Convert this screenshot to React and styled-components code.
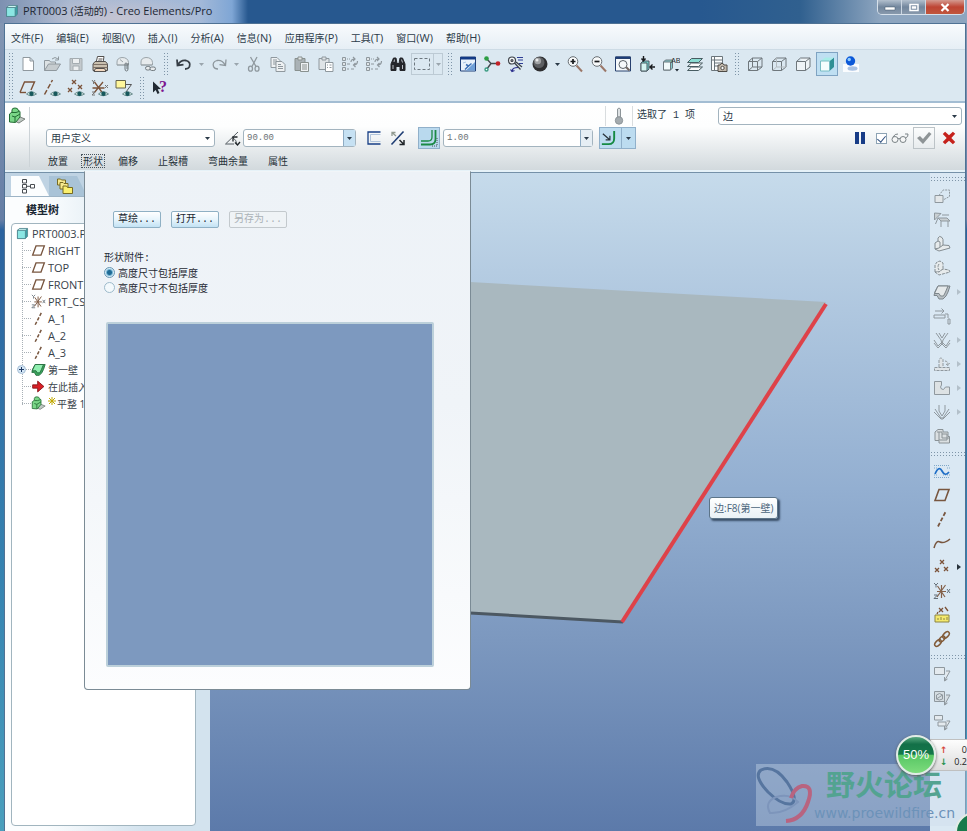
import React from 'react'
import styled, { createGlobalStyle, css } from 'styled-components'

const ui = '"Open Sans", "Noto Sans CJK SC", sans-serif'
const mono = '"Liberation Mono", "Noto Sans CJK SC", monospace'

const GlobalStyle = createGlobalStyle`
* { box-sizing: border-box; }
body {
  margin: 0;
  font-family: ${ui};
  font-size: 10px;
  line-height: 14px;
  color: #2c3b49;
  overflow: hidden;
}
button, input, select { font: inherit; color: inherit; margin: 0; padding: 0; }
button { background: none; border: 0; }
`

const G = '#8f989e'
const B = '#7b5238'

const eye = (
  <g>
    <path d="M7.500 15 Q12 10.500 17.500 15 Q12 18.500 7.500 15Z" fill="#cfe3df" stroke="#41686a" strokeWidth=".7" />
    <circle cx="12.500" cy="14.700" r="2.200" fill="#17585c" />
  </g>
)

const cubeLines = 'M2.500 6.500h9v9h-9zM6.500 3h9.500v9l-4.500 3.500M2.500 6.500l4-3.500M11.500 6.500L16 3'
const cross = (x, y) => <path d={`M${x - 2} ${y - 2}l4 4m0-4l-4 4`} stroke={B} strokeWidth="1.300" />

const icons = {
  part: (
    <g stroke="#4b7f88">
      <path d="M2 5l3-2.500h11V13l-3 3H2z" fill="#3c9fa4" />
      <path d="M2 4.500h11V16H2z" fill="#8be6e3" />
      <path d="M2 4.500l3-2.500h11l-3 2.500z" fill="#d4fbf8" />
    </g>
  ),
  newFile: <path d="M4 2.500h7l3.500 3.500v9.500H4zM11 2.500V6h3.500" fill="#fff" stroke={G} />,
  open: (
    <g fill="#dde2e4" stroke={G}>
      <path d="M1.500 15.500V5.500h5l1 1.500h5v2" />
      <path d="M1.500 15.500l4-6.500h12l-4 6.500z" fill="#c6cccf" />
      <path d="M9 4q3-3 6 0M15.500 1.500V5H12" fill="none" />
    </g>
  ),
  save: (
    <g fill="#c3c9cd" stroke="#a4acb1">
      <path d="M3 3.500h12v12H3z" />
      <path d="M5.500 3.500h7v5h-7zM6 11h6v4.500H6z" fill="#eceff1" />
    </g>
  ),
  print: (
    <g stroke="#54514f">
      <path d="M5 8l1.500-6.500H13L12 8" fill="#fff" />
      <path d="M7.500 4h4M7 6h4" />
      <path d="M2 9l2-2.500h10.500L16.500 9v6.500H2z" fill="#c9bfae" />
      <path d="M2 9.500h14.500M2 12.500h14.500" stroke="#7c7065" />
      <path d="M4.500 13.500h9l1.500 3H3z" fill="#f3d9c1" />
    </g>
  ),
  mailAttach: (
    <g fill="#e7ebed" stroke="#9ba4a9">
      <path d="M2 10V7q0-4 5-4.500 6 0 6.500 5v2.500z" />
      <path d="M2 10h11M5 4.500l3 2.500" />
      <path d="M13 8v6q0 2-1.500 2T10 14V9q0-1 1-1t1 1v5" stroke="#6f787d" fill="none" />
    </g>
  ),
  mailLink: (
    <g fill="#e7ebed" stroke="#9ba4a9">
      <path d="M2 10V7q0-4 5-4.500 6 0 6.500 5v2.500z" />
      <path d="M2 10h11" />
      <rect x="6.500" y="11.500" width="5" height="3.500" rx="1.700" stroke="#737c81" />
      <rect x="11" y="12" width="5.500" height="3.500" rx="1.700" stroke="#737c81" />
    </g>
  ),
  undo: <path d="M2 4.500l.5 6 6-.8M2.800 10Q6 4.500 11 5.500q5 1.500 3.500 6-1 2.500-4.500 2.500" fill="none" stroke="#363e46" strokeWidth="1.800" />,
  redo: <path d="M16 4.500l-.5 6-6-.8M15.200 10Q12 4.500 7 5.500q-5 1.500-3.500 6 1 2.500 4.500 2.500" fill="none" stroke="#8e979d" strokeWidth="1.300" />,
  cut: (
    <g fill="none" stroke={G} strokeWidth="1.300">
      <path d="M5.500 2l5.500 9.500M12 2L7 11.500" />
      <ellipse cx="5.500" cy="13.700" rx="2" ry="2.500" />
      <ellipse cx="12" cy="13.700" rx="2" ry="2.500" />
    </g>
  ),
  copy: (
    <g fill="#eef1f3" stroke={G}>
      <path d="M2 2.500h6l3 3v7H2z" />
      <path d="M4 5h4M4 7h5M4 9h4" />
      <path d="M7 6.500h6l3 3v7H7z" />
      <path d="M9 9.500h3M9 11.500h5M9 13.500h5" />
    </g>
  ),
  paste: (
    <g fill="#aab2b6" stroke="#89918f">
      <path d="M2 3.500h10v12H2z" />
      <path d="M5 2h4v3H5z" fill="#e4e7e8" />
      <path d="M7.500 7.500h8v9h-8z" fill="#eef1f3" />
      <path d="M9 10h5M9 12h5M9 14h5" />
    </g>
  ),
  pasteSpecial: (
    <g fill="#dfe4e7" stroke={G}>
      <path d="M2 3.500h10v11H2z" />
      <path d="M5 2h4v3H5z" />
      <path d="M8.500 7.500h7.500v9H8.500z" fill="#fff" />
      <path d="M10 10h1m1.500 0h2M10 12.500h1m1.500 0h2" />
    </g>
  ),
  regen: (
    <g fill="none" stroke={G}>
      <path d="M1.500 2.500h3v3h-3zM1.500 7.500h3v3h-3zM1.500 12.500h3v3h-3z" fill="#dfe4e7" />
      <path d="M6 4h1m1 0h1M6 9h3M6 14h2m2 0h3" />
      <path d="M10 7q0-3 4-3m-2-2l2 2-2 2M16.500 6q0 4-4 4m2 2l-2-2 2-2" strokeWidth="1.200" />
    </g>
  ),
  find: (
    <g fill="#24262b" stroke="#24262b">
      <path d="M2 15.500V9l2.500-6H7l1 5.500h2L11 3h2.500L16 9v6.500h-5v-4H7v4z" />
      <path d="M4 10v4M5.500 4.500L5 7M12.500 4.500l1 3M13.500 10v4" stroke="#b9bec6" />
    </g>
  ),
  selectBox: <path d="M1.500 3.500h15v11h-15z" fill="none" stroke="#6c777e" strokeDasharray="3 2" />,
  repaint: (
    <g>
      <path d="M1.500 2h15v14h-15z" fill="#e8f2fb" stroke="#1f3f78" />
      <path d="M1.500 2h15v2.500h-15z" fill="#123a86" />
      <path d="M16 7v8.500H7z" fill="#6ea0d8" />
      <path d="M7 9.500l2.500 1.500 3-2.500M9.500 11L6 14.500" stroke="#3b6fb5" strokeWidth="1.500" fill="none" />
      <path d="M4 8l3-1" stroke="#a9c6e6" />
    </g>
  ),
  spin: (
    <g strokeWidth="1.400">
      <path d="M3.500 3.500L8 8.500l-4.500 6M8 8.500h7" stroke="#43494d" fill="none" />
      <circle cx="3.500" cy="3.500" r="2.300" fill="#2d9e44" />
      <circle cx="15" cy="8.500" r="2.300" fill="#c32127" />
      <circle cx="3.500" cy="14.500" r="1.500" fill="#fff" stroke="#3b9c83" />
    </g>
  ),
  orient: (
    <g fill="none" stroke="#3b4047" strokeWidth="1.200">
      <circle cx="5" cy="5.500" r="3.500" fill="#f4f6f7" />
      <circle cx="5" cy="5.500" r="1" />
      <path d="M7.500 8l6 6.500M9 7l6 5" />
      <path d="M10 2.500h6M11 5h5M12 8.500h4" stroke="#2f3d95" />
      <path d="M11 12.500q-6 0-6 4m-1.500-2L5 16.500l2.500-1" stroke="#2b2f8c" />
    </g>
  ),
  shade: (
    <g>
      <circle cx="9" cy="9" r="7.500" fill="#2e2f31" />
      <circle cx="8" cy="7.500" r="5.500" fill="#5d5f62" />
      <circle cx="6.800" cy="6" r="3.300" fill="#a0a2a4" />
      <circle cx="6" cy="5" r="1.500" fill="#e9eaea" />
    </g>
  ),
  zoomIn: (
    <g fill="none">
      <path d="M10.500 10.500l5.500 6" stroke="#9b7768" strokeWidth="2" />
      <circle cx="7" cy="6.500" r="4.800" fill="#f7f9fa" stroke="#686e73" />
      <path d="M4.500 6.500h5M7 4v5" stroke="#17191c" strokeWidth="1.700" />
    </g>
  ),
  zoomOut: (
    <g fill="none">
      <path d="M10.500 10.500l5.500 6" stroke="#9b7768" strokeWidth="2" />
      <circle cx="7" cy="6.500" r="4.800" fill="#f7f9fa" stroke="#686e73" />
      <path d="M4.500 6.500h5" stroke="#17191c" strokeWidth="1.700" />
    </g>
  ),
  refit: (
    <g fill="#f6f9fb" stroke="#27406e">
      <path d="M1.500 2h15v14h-15z" />
      <path d="M1.500 2h15v1.500h-15z" fill="#123a86" />
      <path d="M11.500 11.500l4 4" stroke="#70655f" strokeWidth="2" />
      <circle cx="9" cy="9.500" r="4" stroke="#5b6268" />
    </g>
  ),
  reorient: (
    <g stroke="#4a5b63">
      <path d="M3 8l2-2h6v8l-2 2H3z" fill="#73cfcb" />
      <path d="M3 8h6v8H3z" fill="#d5f4f2" />
      <path d="M5.500 1v4.500m-2-2l2 2.500 2-2.500M17 12h-4m1.500-2.500L12 12l2.500 2.500" stroke="#17191c" strokeWidth="1.400" fill="none" />
    </g>
  ),
  saved: (
    <g stroke="#6a767c">
      <path d="M1.500 7l2-2h7v8l-2 2h-7z" fill="#85c9cb" />
      <path d="M1.500 7h7v8h-7z" fill="#f1fafa" />
      <path d="M13 14h4l-2 2.500z" fill="#1c2630" stroke="none" />
      <text x="9" y="8" fontSize="8" fontFamily="Liberation Mono, monospace" fill="#30363c" stroke="none">AB</text>
    </g>
  ),
  layers: (
    <g fill="#fafbfb" stroke="#485c62">
      <path d="M1.500 15.500l4-3.500h11l-4 3.500z" />
      <path d="M1.500 11.500l4-3.500h11l-4 3.500z" />
      <path d="M1.500 7.500l4-4h11l-4 4z" fill="#8bdcd2" />
    </g>
  ),
  viewMgr: (
    <g fill="#fbfcfc" stroke="#6b757b">
      <path d="M1.500 1.500h11v14h-11zM4.500 1.500v14M1.500 5h11M4.500 8h8M4.500 11h8" />
      <path d="M8 10h2l1-1.500h2l1 1.500h3v6.500H8z" fill="#c2b9ac" stroke="#4e4b46" />
      <circle cx="12.500" cy="13" r="1.700" stroke="#4e4b46" />
    </g>
  ),
  wire: <path d={cubeLines + 'M6.500 3v9H16M6.500 12l-4 3.500'} fill="none" stroke="#6f777c" />,
  hidden: (
    <g fill="none" stroke="#6f777c">
      <path d={cubeLines} />
      <path d="M6.500 3v9H16M6.500 12l-4 3.500" stroke="#b4bbbf" />
    </g>
  ),
  noHidden: <path d={cubeLines} fill="#eef3f6" stroke="#6f777c" />,
  shaded: (
    <g>
      <path d="M11.500 6L16 2.500v9.500l-4.500 4z" fill="#2f8f94" />
      <path d="M2.500 6L7 2.500h9L11.500 6z" fill="#a9ece8" />
      <path d="M2.500 6h9v10h-9z" fill="#f4fdfd" stroke="#77bcc3" />
    </g>
  ),
  realism: (
    <g>
      <path d="M1 9h16v8H1z" fill="#fafcfe" />
      <ellipse cx="10.500" cy="13.500" rx="5" ry="2.200" fill="#a8c1e3" />
      <circle cx="8.500" cy="6" r="4.700" fill="#0b58d8" />
      <circle cx="7.200" cy="4.500" r="1.700" fill="#8ecbff" />
    </g>
  ),
  planeEye: (
    <g>
      <path d="M1 13.500L5.500 3h10l-3.500 8" fill="none" stroke={B} strokeWidth="1.400" />
      <path d="M1 13.500h6" stroke={B} strokeWidth="1.400" />
      {eye}
    </g>
  ),
  axisEye: (
    <g>
      <path d="M1.500 15.500L9.500 1" stroke={B} strokeWidth="1.500" strokeDasharray="5 2" />
      {eye}
    </g>
  ),
  pointEye: <g>{cross(7, 3)}{cross(3, 11)}{cross(13, 8)}{eye}</g>,
  csysEye: (
    <g>
      <path d="M1.500 9h12M3.500 3l8 11M12 3L3 14" stroke={B} strokeWidth="1.300" />
      <path d="M1 1l1.500 2L4 1M2.500 3v2M14 6l3 3m0-3l-3 3M1 13h3l-3 3h3" stroke="#777" fill="none" />
      {eye}
    </g>
  ),
  noteEye: (
    <g>
      <path d="M1 1.500h9.500v7.500H1z" fill="#fff79b" stroke="#66654c" />
      <path d="M11 5.500h5.500L11 13" fill="none" stroke="#555" />
      {eye}
    </g>
  ),
  help: (
    <g>
      <path d="M2 2.500v11l2.700-2.500 1.800 4 2-1-1.800-3.700 3.300-.3z" fill="#222a33" />
      <text x="8" y="13" fontSize="16" fontWeight="700" fontFamily="Liberation Serif, serif" fill="#7d1690">?</text>
    </g>
  ),
  plane: <path d="M2 14.500L6 3.500h10l-4 11z" fill="none" stroke="#78563f" strokeWidth="1.600" />,
  axis: <path d="M5 16.500L13 1" stroke="#78563f" strokeWidth="1.800" strokeDasharray="4 2" />,
  csys: (
    <g fill="none">
      <path d="M4 9.500h9M4.500 4l7.500 11M12.500 3L4 15M8.500 3v13" stroke="#84614a" strokeWidth="1.200" />
      <path d="M1 1l2 2 2-2M3 3v2.500M14 7l3 4m0-4l-3 4M1 13h3.500L1 16.500h4" stroke="#66717a" />
    </g>
  ),
  wall: (
    <g stroke="#20663a">
      <path d="M5 3h12l-2 6-2 4-3 3H6l-2-3.500H1l1-4z" fill="#3aa65c" />
      <path d="M5 3h10l-2.500 6-2 4H7.500L6 10.500H1.500z" fill="#91efb1" />
    </g>
  ),
  insert: <path d="M2 7h6V2.500l7.500 6.500L8 15.500V11H2z" fill="#d81f26" stroke="#7f1013" />,
  flat: (
    <g stroke="#236c34">
      <path d="M4 13l7 3 6-4-5-2z" fill="#bfc9c3" stroke="#7a827d" />
      <path d="M1.500 14V7l2.500-2V3q0-2 3-2t3 2l2 1.500V10l-4.500 5.500-6-.5z" fill="#7ad688" />
      <path d="M4 5.500h4l3-1M4 9l3 1 5-3M7 10v5" fill="none" />
    </g>
  ),
  tree: <path d="M3.500 2.500h4v3.500h-4zM3.500 7.500h4v3.500h-4zM3.500 12.500h4V16h-4zM11.500 7.500h4v3.500h-4zM8 9.300h3" fill="#fff" stroke="#484d52" />,
  folders: (
    <g fill="#f7e98e" stroke="#776b23">
      <path d="M1.500 8V2h3l1 1h4v5z" />
      <path d="M4 12V5.500h3l1 1h4V12z" />
      <path d="M7 16.500V9h3.500l1 1.500h5v6z" fill="#fbf06e" />
    </g>
  ),
  angle: (
    <g fill="none" stroke="#555d62">
      <path d="M14 3L1.500 15H10" />
      <path d="M8.500 8.500q4 2 4.500 7" />
      <path d="M9 12.500V8h4.500M11 13.500l2.500 2.500 2.500-3" stroke="#20262a" strokeWidth="1.300" />
    </g>
  ),
  profile: (
    <g fill="none">
      <path d="M15.500 3H3v12h12.500" stroke="#173f86" strokeWidth="1.300" />
      <path d="M15.500 5.500h-10v7h10" stroke="#b1c5dc" />
    </g>
  ),
  flip: (
    <g fill="none">
      <path d="M14.500 2.500L2.500 15.500" stroke="#1f3e74" strokeWidth="1.600" />
      <path d="M7 7L3 3.500M3 7V3.500h3.500" stroke="#929b91" strokeWidth="1.300" />
      <path d="M10.500 11l4 4M15 11v4.500h-4.500" stroke="#20262a" strokeWidth="1.500" />
    </g>
  ),
  bend: (
    <g fill="none">
      <path d="M12 1v7q0 4-4 4H1" stroke="#1b8a45" strokeWidth="1.300" />
      <path d="M15.500 1v9q0 5.500-5.500 5.500H1" stroke="#1b8a45" strokeWidth="1.800" />
      <path d="M17 9v8h-6" stroke="#455" strokeDasharray="1 1" />
    </g>
  ),
  radius: (
    <g fill="none">
      <path d="M15 1v8q0 6-6 6H2" stroke="#168a43" strokeWidth="2" />
      <path d="M3 4l7 6M10.500 6v4.500H6" stroke="#28333a" strokeWidth="1.300" />
    </g>
  ),
  thermo: (
    <g stroke="#8d9599">
      <path d="M7.500 2q1.500-2 3 0v8h-3z" fill="#dde1e3" />
      <circle cx="9" cy="13.500" r="3.700" fill="#a4abaf" />
    </g>
  ),
  pause: <path d="M4 3h4v12H4zM10 3h4v12h-4z" fill="#173c86" />,
  glasses: (
    <g fill="#f5f6f6" stroke="#7b8387">
      <circle cx="4" cy="10.500" r="3" />
      <circle cx="12" cy="10.500" r="3" />
      <path d="M7 10q1-1.500 2 0M2 8q2-3.500 5-3M14.500 9q3-1 2.500-4h-3" fill="none" />
    </g>
  ),
  check: <path d="M2 9l3-2 3 3 6-7 2.500 2L8 15z" fill="#8e9496" />,
  cancel: <path d="M1 4l3-3 5 4.500L14 1l3 2.500L12 9l5 5-3 3-5-4.500L4 17l-3-3 5-5z" fill="#c5221c" />,
  extrude: (
    <g fill="#e3e7e9" stroke={G}>
      <path d="M2 8.500h8v7H2z" />
      <path d="M6 8.500L10 3h6.500v6.500L10 13" fill="none" strokeDasharray="2 1" />
    </g>
  ),
  unattached: (
    <g fill="#c9cfd2" stroke={G}>
      <path d="M1.500 2v7L8 2.500zM5 7h9l3 3H8z" />
      <path d="M5 7L2.500 13M15 10v6M8 10v6M9 4h7" />
    </g>
  ),
  flatWall: (
    <g fill="#e7ebec" stroke="#848d92">
      <path d="M2 14V8l3-2V3q1.500-3 4-.5l1 2V10l-4 4z" />
      <path d="M5 6l2 1v5M2 14l4 2 11-3-1-2.500-6-.5-4 3z" />
    </g>
  ),
  flange: (
    <g fill="#e7ebec" stroke="#848d92" strokeDasharray="3 1">
      <path d="M2 13V6l2-3 3-1 3 2v6l-4 3z" />
      <path d="M2 13l4 3 11-3-1-2-6-1-4 3z" />
      <path d="M6 5q-2 3 0 6" fill="none" />
    </g>
  ),
  grayWall: (
    <g fill="#b9c0c4" stroke="#7d868b">
      <path d="M5 3h12l-2 6-2 4-3 3H6l-2-3.500H1l1-4z" />
      <path d="M5 3h10l-2.500 6-2 4H7.500L6 10.500H1.500z" fill="#e5e9ea" />
    </g>
  ),
  extend: <path d="M2 4h9m-2.500-2.500L11 4 8.500 6.500M1 8h11v3H1zM12 7h3v4M15 12h2v5h-2z" fill="none" stroke={G} />,
  bendAll: <path d="M3 2l5 7 1 4 1-4 5-7M6 2l3 5 3-5M1 9l4 6 4-4 4 4 4-6M1 12l4 5 4-4 4 4 4-5" fill="none" stroke={G} />,
  edgeBend: <path d="M1.500 12.500h15v3h-15zM6 12V4.500q2-3 4 0V12M12 6q3 0 3 4m-2-1l2 1.500L16.500 8" fill="#dfe4e7" stroke={G} strokeDasharray="3 1" />,
  notch: <path d="M1.500 2.500h7V6q-2 2 0 4t4-2h4v7.500h-15z" fill="#dde2e4" stroke={G} />,
  vBend: <path d="M2 6l6 9h2l6-9M6 2v6l3 5 3-5V2M1 9l7 7h2l7-7" fill="none" stroke={G} />,
  pattern: <path d="M2 5l3-2.500h5V5h5v4.500h1.500V16H6v-2.500H2zM4 5h5v6h7M6 5v8M9 7h5v6H6" fill="#dbe0e2" stroke="#8a9296" />,
  sketch: (
    <g fill="none">
      <path d="M1 3.500h16M1 6h3m10 0h3M1 15.500h16M1 13h3m6 0h7" stroke="#7fa8c8" strokeDasharray="1 1" />
      <path d="M2 12q4-9 7-3t7 1" stroke="#1f6fc7" strokeWidth="1.700" />
    </g>
  ),
  curve: <path d="M1 14q2-8 6-6t10-3" fill="none" stroke="#78563f" strokeWidth="1.500" />,
  points: <g>{cross(9, 4)}{cross(4, 12)}{cross(13, 11)}</g>,
  evaluate: (
    <g>
      {cross(8, 4)}
      <path d="M12 1l3 4M5 6l-1 2" stroke={B} strokeWidth="1.300" />
      <path d="M2 9h14v7H2z" fill="#f4e96d" stroke="#8b8445" />
      <path d="M5 12v2m3-3v3m3-2v2m3-3v3" stroke="#8b8445" />
    </g>
  ),
  chain: (
    <g fill="none" stroke="#815a37" strokeWidth="1.500">
      <ellipse cx="5" cy="13" rx="4" ry="2.300" transform="rotate(-45 5 13)" />
      <ellipse cx="9" cy="9" rx="3.500" ry="2" transform="rotate(-45 9 9)" />
      <ellipse cx="13" cy="5" rx="4" ry="2.300" transform="rotate(-45 13 5)" />
    </g>
  ),
  noteGray: <path d="M1.500 2.500h10v7h-10zM13 6h4l-5.500 10m0-4v4l3-2" fill="#e4eaee" stroke={G} />,
  symbolGray: <path d="M1.500 2.500h10v10h-10zM3.500 6q3-3 6 0v4q-3 2-6 0zM3.500 10l6-4M13 6h4l-5.500 10m0-4v4l3-2" fill="#d5dde2" stroke={G} />,
  linkGray: <path d="M1.500 2.500h8v4.500h-8zM5 9h8v4H5zM13.500 8h3.500l-5.500 9m0-4v4l3-2" fill="#e4eaee" stroke={G} />,
}

const Svg = styled.svg`
  display: block;
  flex: none;
`

const Icon = ({ name, size = 18 }) => (
  <Svg width={size} height={size} viewBox="0 0 18 18" fill="none" aria-hidden="true">
    {icons[name]}
  </Svg>
)

const Caret = ({ color = '#2b3a48' }) => (
  <Svg width="7" height="5" viewBox="0 0 7 5" aria-hidden="true">
    <path d="M1 1h5L3.500 4z" fill={color} />
  </Svg>
)

const menus = [
  ['文件', '(F)'], ['编辑', '(E)'], ['视图', '(V)'], ['插入', '(I)'], ['分析', '(A)'],
  ['信息', '(N)'], ['应用程序', '(P)'], ['工具', '(T)'], ['窗口', '(W)'], ['帮助', '(H)'],
]

const mainTools = [
  'newFile', 'open', 'save', 'print', 'mailAttach', 'mailLink', '|',
  'undo', 'v', 'redo', 'v', 'cut', 'copy', 'paste', 'pasteSpecial', 'regen', 'regen', 'find', 'box', '|',
  'repaint', 'spin', 'orient', 'shade', 'V', 'zoomIn', 'zoomOut', 'refit', 'reorient', 'saved', 'layers', 'viewMgr', '|',
  'wire', 'hidden', 'noHidden', 'shaded', 'realism',
]

const datumTools = ['planeEye', 'axisEye', 'pointEye', 'csysEye', 'noteEye', '|', 'help']

const sideTools = [
  '-', 'extrude', 'unattached', 'flatWall', 'flange', 'grayWall>', 'extend', 'bendAll>', 'edgeBend>', 'notch>', 'vBend>', 'pattern',
  '-', 'sketch', 'plane', 'axis', 'curve', 'points>', 'csys', 'evaluate', 'chain',
  '-', 'noteGray', 'symbolGray', 'linkGray',
]

const treeItems = [
  { icon: 'plane', label: 'RIGHT' },
  { icon: 'plane', label: 'TOP' },
  { icon: 'plane', label: 'FRONT' },
  { icon: 'csys', label: 'PRT_CS' },
  { icon: 'axis', label: 'A_1' },
  { icon: 'axis', label: 'A_2' },
  { icon: 'axis', label: 'A_3' },
  { icon: 'wall', label: '第一壁', cjk: true, plus: true },
  { icon: 'insert', label: '在此插入', cjk: true },
  { icon: 'flat', label: '平整 1', cjk: true, star: true },
]

const Tools = ({ items }) => items.map((t, i) => {
  if (t === '|') return <Grip key={i} />
  if (t === 'v' || t === 'V') {
    return <CaretButton key={i} aria-label="more"><Caret color={t === 'v' ? '#9aa5ad' : undefined} /></CaretButton>
  }
  if (t === 'box') {
    return (
      <SelectTool key={i} aria-label={t}>
        <Icon name="selectBox" />
        <SelectCaret><Caret color="#9aa5ad" /></SelectCaret>
      </SelectTool>
    )
  }
  return <ToolButton key={i} aria-label={t} $active={t === 'shaded'}><Icon name={t} /></ToolButton>
})

const Title = () => (
  <TitleBar>
    <Icon name="part" size={14} />
    <TitleText>PRT0003 (<Han>活动的</Han>) - Creo Elements/Pro</TitleText>
    <WindowButtons>
      <WindowButton aria-label="minimize">
        <Svg width="12" height="8"><path d="M1 4h10v3H1z" fill="#fff" stroke="#43566b" strokeWidth=".5" /></Svg>
      </WindowButton>
      <WindowButton aria-label="maximize">
        <Svg width="12" height="9"><path d="M2 1.500h8v6H2zM4.500 4h3v1h-3z" fill="none" stroke="#fff" strokeWidth="1.500" /></Svg>
      </WindowButton>
      <WindowButton aria-label="close" $close>
        <Svg width="12" height="9"><path d="M2.500 1l7 7m0-7l-7 7" stroke="#fff" strokeWidth="2.200" /></Svg>
      </WindowButton>
    </WindowButtons>
  </TitleBar>
)

const Dashboard = () => (
  <Dash>
    <DashIcon><Icon name="flat" /></DashIcon>
    <DashBody>
      <StatusRow>
        <StatusIcon><Icon name="thermo" /></StatusIcon>
        <StatusText>选取了 1 项</StatusText>
        <SelectWrap $width="244px">
          <Select aria-label="过滤器" defaultValue="边"><option>边</option></Select>
          <Caret />
        </SelectWrap>
      </StatusRow>
      <DashRow>
        <SelectWrap $width="169px">
          <Select aria-label="形状" defaultValue="用户定义"><option>用户定义</option></Select>
          <Caret />
        </SelectWrap>
        <AngleLabel htmlFor="angle"><Icon name="angle" /></AngleLabel>
        <Combo $width="113px">
          <ComboInput id="angle" aria-label="角度" defaultValue="90.00" />
          <ComboButton $blue aria-label="角度列表"><Caret /></ComboButton>
        </Combo>
        <PlainButtons>
          <ToolButton aria-label="轮廓"><Icon name="profile" /></ToolButton>
          <ToolButton aria-label="反向"><Icon name="flip" /></ToolButton>
        </PlainButtons>
        <Toggle aria-label="折弯"><Icon name="bend" /></Toggle>
        <Combo $width="150px">
          <ComboInput aria-label="半径" defaultValue="1.00" />
          <ComboButton aria-label="半径列表"><Caret /></ComboButton>
        </Combo>
        <SplitButton aria-label="内侧半径">
          <Icon name="radius" size={17} />
          <SplitCaret><Caret /></SplitCaret>
        </SplitButton>
        <Confirm>
          <BareButton aria-label="暂停"><Icon name="pause" /></BareButton>
          <CheckBox type="checkbox" aria-label="预览" defaultChecked />
          <Icon name="glasses" />
          <AcceptButton aria-label="确定"><Icon name="check" /></AcceptButton>
          <BareButton aria-label="取消"><Icon name="cancel" size={14} /></BareButton>
        </Confirm>
      </DashRow>
      <DashTabs>
        <DashTab>放置</DashTab>
        <DashTab $active>形状</DashTab>
        <DashTab>偏移</DashTab>
        <DashTab $wide>止裂槽</DashTab>
        <DashTab $wide>弯曲余量</DashTab>
        <DashTab $wide>属性</DashTab>
      </DashTabs>
    </DashBody>
  </Dash>
)

const ModelTree = () => (
  <Side>
    <SideTabs>
      <SideTab $active aria-label="模型树"><Icon name="tree" /></SideTab>
      <SideTab aria-label="文件夹"><Icon name="folders" /></SideTab>
    </SideTabs>
    <SideTitle>模型树</SideTitle>
    <TreeBox>
      <TreeRoot><Icon name="part" size={13} />PRT0003.P</TreeRoot>
      <TreeList>
        {treeItems.map((item) => (
          <TreeItem key={item.label} $cjk={item.cjk}>
            {item.plus && (
              <Plus width="9" height="9">
                <circle cx="4.500" cy="4.500" r="4" fill="#d4e6f5" stroke="#a7bfd6" />
                <path d="M2 4.500h5M4.500 2v5" stroke="#1d3a66" />
              </Plus>
            )}
            <Icon name={item.icon} size={15} />
            {item.star && (
              <Star width="8" height="8">
                <path d="M4 0v8M0 4h8M1 1l6 6M7 1L1 7" stroke="#c2a800" />
              </Star>
            )}
            <span>{item.label}</span>
          </TreeItem>
        ))}
      </TreeList>
    </TreeBox>
  </Side>
)

const ShapePanel = () => (
  <Panel>
    <PanelButtons>
      <PanelButton>草绘...</PanelButton>
      <PanelButton>打开...</PanelButton>
      <PanelButton disabled $wide>另存为...</PanelButton>
    </PanelButtons>
    <Options>
      <Legend>形状附件:</Legend>
      <Option><Radio type="radio" name="attach" defaultChecked />高度尺寸包括厚度</Option>
      <Option><Radio type="radio" name="attach" />高度尺寸不包括厚度</Option>
    </Options>
    <Preview />
  </Panel>
)

const App = () => (
  <Frame>
    <GlobalStyle />
    <Title />
    <Client>
      <MenuBar>
        {menus.map(([name, key]) => <MenuItem key={name}>{name}<MenuKey>{key}</MenuKey></MenuItem>)}
      </MenuBar>
      <Toolbars>
        <Grip />
        <ToolRows>
          <ToolRow><Tools items={mainTools} /></ToolRow>
          <ToolRow><Tools items={datumTools} /></ToolRow>
        </ToolRows>
      </Toolbars>
      <Dashboard />
      <Work>
        <ModelTree />
        <Viewport>
          <Scene viewBox="0 0 720 659" preserveAspectRatio="xMinYMin slice">
            <path d="M0 94L260 109 616 129 412 449 260 440 0 425z" fill="#a9b8bf" />
            <path d="M0 425l260 15 153 9" stroke="#4c5862" strokeWidth="3" fill="none" />
            <path d="M616 131L412 449" stroke="#de4249" strokeWidth="4" />
          </Scene>
          <Tooltip>边:F8(第一壁)</Tooltip>
        </Viewport>
        <SideBar>
          {sideTools.map((t, i) => t === '-' ? <GripRow key={i} /> : (
            <SideTool key={i} aria-label={t.replace('>', '')}>
              <Icon name={t.replace('>', '')} />
              {t.endsWith('>') && (
                <Svg width="4" height="6"><path d="M0 0l4 3-4 3z" fill={t === 'points>' ? '#27323b' : '#b3c0ca'} /></Svg>
              )}
            </SideTool>
          ))}
        </SideBar>
        <ShapePanel />
      </Work>
    </Client>
    <Watermark>
      <Svg width="58" height="58" viewBox="0 0 58 58" fill="none">
        <path d="M5 4Q18-2 31 16q12 18 4 22-10 1-23-12Q-3 10 5 4z" stroke="#56759f" strokeWidth="3" />
        <path d="M14 47Q8 36 20 31q14-4 22 5-14 12-28 11z" stroke="#7d95bb" strokeWidth="2" />
        <path d="M30 55q16-1 22-19 6-17-6-16-8 2-11 12" stroke="#b86480" strokeWidth="4" />
      </Svg>
      <MarkText>
        <MarkName>野火论坛</MarkName>
        <MarkUrl>www.proewildfire.cn</MarkUrl>
      </MarkText>
    </Watermark>
    <Speed>
      <SpeedBall>50%</SpeedBall>
      <SpeedBar>
        <SpeedLine><Arrow $up>↑</Arrow>0</SpeedLine>
        <SpeedLine><Arrow>↓</Arrow>0.2</SpeedLine>
      </SpeedBar>
    </Speed>
    <CornerBall />
  </Frame>
)

const Frame = styled.div`
  position: relative;
  display: flex;
  flex-direction: column;
  height: 100vh;
  padding: 0 1px 0 4px;
  overflow: hidden;
  background: linear-gradient(#8799b5 0, #657ea5 220px, #2b639f 230px, #3583b1 70%, #4a9fbd);
`

const TitleBar = styled.header`
  display: flex;
  align-items: flex-start;
  height: 23px;
  margin: 0 -1px 0 -4px;
  padding: 4px 2px 0 5px;
  background:
    radial-gradient(ellipse 90px 22px at 120px 18px, #c5c4d2 0, transparent 100%),
    linear-gradient(90deg, #7d91b1 0, #a9b8d0 70px, #a3b9d8 200px, #7fa6d5 232px, #27588f 248px, #27588f 700px, #30608f 800px, #8da5bf 880px);
`

const TitleText = styled.span`
  flex: 1;
  margin-left: 4px;
  font-size: 11px;
  color: #1d2733;
`

const Han = styled.span`
  font-size: 10px;
`

const WindowButtons = styled.div`
  display: flex;
  margin-top: -4px;
  border: 1px solid #d6e0ea;
  border-top: 0;
  border-radius: 0 0 5px 5px;
  overflow: hidden;
`

const WindowButton = styled.button`
  display: flex;
  align-items: center;
  justify-content: center;
  width: ${(p) => (p.$close ? 38 : 24)}px;
  height: 14px;
  border-right: ${(p) => (p.$close ? '0' : '1px solid #cbd6e2')};
  background: ${(p) => (p.$close
    ? 'linear-gradient(#d49a90, #be4433 50%, #c0563c)'
    : 'linear-gradient(#b3c0ce, #72869d 50%, #8899ac)')};
`

const Client = styled.main`
  display: flex;
  flex: 1;
  flex-direction: column;
  min-height: 0;
  border: 1px solid #4f7294;
  border-bottom: 0;
  background: #dbe8f1;
`

const MenuBar = styled.nav`
  display: flex;
  flex: none;
  align-items: center;
  gap: 13px;
  height: 26px;
  padding: 3px 6px 0;
  border-bottom: 1px solid #cddbe5;
  background: linear-gradient(#f8fbfd, #e6eef5);
`

const MenuItem = styled.button`
  white-space: nowrap;
`

const MenuKey = styled.span`
  font-size: 11px;
`

const Toolbars = styled.div`
  display: flex;
  flex: none;
  height: 53px;
  padding: 2px 0;
  border-bottom: 2px solid #a3bdd3;
`

const ToolRows = styled.div`
  flex: 1;
`

const ToolRow = styled.div`
  display: flex;
  height: 24px;
`

const Grip = styled.i`
  flex: none;
  width: 11px;
  background: radial-gradient(circle, #7f95a8 0 1px, transparent 1px) 3px 0 / 3px 3px;
  clip-path: inset(0 2px 0 3px);
  & + button { margin-left: 1px; }
`

const ToolButton = styled.button`
  display: flex;
  flex: none;
  align-items: center;
  justify-content: center;
  width: 24px;
  height: 24px;
  ${(p) => p.$active && css`
    width: 22px;
    margin: 0 1px;
    border: 1px solid #7fa3c2;
    background: #bfdff2;
  `}
`

const CaretButton = styled.button`
  display: flex;
  align-items: center;
  justify-content: center;
  width: 11px;
`

const SelectTool = styled.button`
  display: flex;
  align-items: center;
  gap: 2px;
  width: 32px;
  height: 22px;
  margin: 1px 1px 0;
  padding-left: 1px;
  border: 1px solid #bccad4;
`

const SelectCaret = styled.span`
  display: flex;
  align-items: center;
  height: 20px;
  padding-left: 1px;
  border-left: 1px solid #bccad4;
`

const Dash = styled.section`
  display: flex;
  flex: none;
  height: 69px;
  border-bottom: 2px solid #e6f2f8;
  background: linear-gradient(#fff 0, #fdfefe 35%, #d2d9dd);
`

const DashIcon = styled.div`
  width: 25px;
  margin: 4px 0 3px;
  padding-left: 3px;
  border-right: 1px solid #ccd3d7;
`

const DashBody = styled.div`
  flex: 1;
  padding: 3px 3px 0 16px;
`

const DashRow = styled.div`
  display: flex;
  align-items: center;
  height: 24px;
`

const StatusRow = styled(DashRow)`
  justify-content: flex-end;
  height: 20px;
`

const StatusIcon = styled.div`
  padding: 1px 4px;
  border: solid #d9dddf;
  border-width: 0 1px;
`

const StatusText = styled.span`
  width: 81px;
  margin-left: 4px;
  font-family: ${mono};
`

const SelectWrap = styled.div`
  display: grid;
  align-items: center;
  width: ${(p) => p.$width};
  height: 18px;
  border: 1px solid #a3b4bf;
  border-radius: 3px;
  background: #fff;
  & > * { grid-area: 1 / 1; }
  & > svg { justify-self: end; margin-right: 3px; pointer-events: none; }
`

const Select = styled.select`
  width: 100%;
  height: 16px;
  padding: 0 4px;
  border: 0;
  appearance: none;
  background: none;
`

const AngleLabel = styled.label`
  margin: 0 1px 0 9px;
`

const Combo = styled.div`
  display: flex;
  width: ${(p) => p.$width};
  height: 18px;
  border: 1px solid #a3b4bf;
  border-radius: 3px;
  background: #fff;
`

const ComboInput = styled.input`
  flex: 1;
  min-width: 0;
  padding: 0 3px;
  border: 0;
  background: none;
  font-family: ${mono};
  font-size: 9px;
  color: #6b7275;
`

const ComboButton = styled.button`
  display: flex;
  align-items: center;
  justify-content: center;
  width: 12px;
  border-left: 1px solid #8facc4;
  background: ${(p) => (p.$blue ? '#c6e1f3' : '#e6eef4')};
`

const PlainButtons = styled.div`
  display: flex;
  margin: 0 8px 0 6px;
`

const Toggle = styled.button`
  display: flex;
  align-items: center;
  justify-content: center;
  width: 22px;
  height: 22px;
  margin-right: 3px;
  border: 1px solid #90b0ca;
  background: #b9d9ee;
`

const SplitButton = styled.button`
  display: flex;
  align-items: center;
  justify-content: space-between;
  width: 37px;
  height: 22px;
  margin-left: 6px;
  border: 1px solid #90b0ca;
  background: #bcdcf0;
`

const SplitCaret = styled.span`
  display: flex;
  align-items: center;
  justify-content: center;
  width: 14px;
  height: 20px;
  border-left: 1px solid #90b0ca;
`

const Confirm = styled.div`
  display: flex;
  align-items: center;
  margin-left: auto;
  margin-right: 3px;
  gap: 4px;
`

const BareButton = styled.button`
  padding: 0 3px;
  & svg { display: block; }
`

const CheckBox = styled.input`
  appearance: none;
  display: grid;
  place-items: center;
  width: 11px;
  height: 11px;
  border: 1px solid #8da3b4;
  background: #fff;
  &:checked::after {
    content: '';
    width: 4px;
    height: 7px;
    border: solid #2f4f80;
    border-width: 0 1px 1px 0;
    transform: rotate(40deg);
  }
`

const AcceptButton = styled.button`
  display: flex;
  align-items: center;
  justify-content: center;
  width: 22px;
  height: 22px;
  border: 1px solid #bcc3c7;
`

const DashTabs = styled.div`
  display: flex;
  align-items: center;
  gap: 11px;
  height: 22px;
`

const DashTab = styled.button`
  padding: 0 1px;
  margin-left: ${(p) => (p.$wide ? 5 : 0)}px;
  border: 1px dotted ${(p) => (p.$active ? '#49545c' : 'transparent')};
  line-height: 12px;
  color: #27323a;
`

const Work = styled.div`
  position: relative;
  display: flex;
  flex: 1;
  min-height: 0;
  border-top: 1px solid #7591a8;
`

const Side = styled.aside`
  display: flex;
  flex: none;
  flex-direction: column;
  width: 205px;
  padding-bottom: 5px;
  background: linear-gradient(90deg, #fbfdfe 40px, #d3e3ee 140px);
`

const SideTabs = styled.div`
  display: flex;
  height: 24px;
  padding: 3px 0 0 6px;
  border-bottom: 1px solid #9db4c6;
  background: #bfd3e3;
`

const SideTab = styled.button`
  display: flex;
  align-items: center;
  width: 38px;
  height: 20px;
  padding-left: ${(p) => (p.$active ? 8 : 7)}px;
  clip-path: polygon(0 0, 28px 0, 100% 100%, 0 100%);
  background: ${(p) => (p.$active ? '#fbfdfe' : '#a9c3d7')};
`

const SideTitle = styled.h2`
  margin: 0;
  padding: 6px 21px;
  font-size: 11px;
  line-height: 14px;
  color: #1a2733;
`

const TreeBox = styled.div`
  flex: 1;
  margin: 0 14px 0 6px;
  padding: 1px 4px;
  border: 1px solid #a1b5bf;
  border-radius: 4px;
  background: #fff;
  overflow: hidden;
  white-space: nowrap;
  font-size: 11px;
  color: #38424a;
`

const TreeRoot = styled.div`
  display: flex;
  align-items: center;
  gap: 3px;
  height: 17px;
`

const TreeList = styled.ul`
  margin: 0;
  padding: 0 0 0 15px;
  list-style: none;
  background: repeating-linear-gradient(#a8b0b6 0 1px, transparent 1px 2px) 6px 0 / 1px 163px no-repeat;
`

const TreeItem = styled.li`
  display: flex;
  align-items: center;
  gap: 2px;
  height: 17px;
  margin-left: -9px;
  padding-left: 9px;
  font-size: ${(p) => (p.$cjk ? 10 : 11)}px;
  background: repeating-linear-gradient(90deg, #a8b0b6 0 1px, transparent 1px 2px) 0 8px / 9px 1px no-repeat;
`

const Plus = styled(Svg)`
  margin: 0 3px 0 -14px;
`

const Star = styled(Svg)`
  margin: -5px -1px 0 0;
`

const Panel = styled.section`
  position: absolute;
  top: -2px;
  left: 79px;
  width: 387px;
  height: 519px;
  padding: 39px 36px 22px 21px;
  display: flex;
  flex-direction: column;
  border: 1px solid #7b8b95;
  border-top-color: #f1f5f8;
  border-radius: 0 0 4px 4px;
  background: linear-gradient(#edf2f7, #f0f4f8 45%, #fcfdfe);
`

const PanelButtons = styled.div`
  display: flex;
  gap: 10px;
  padding-left: 7px;
`

const PanelButton = styled.button`
  width: ${(p) => (p.$wide ? 58 : 48)}px;
  height: 17px;
  border: 1px solid #8fb0c4;
  border-radius: 2px;
  background: linear-gradient(#fff, #e8f5fc 50%, #c3e2f4);
  font-family: ${mono};
  font-size: 10px;
  white-space: nowrap;
  color: #1b2731;
  &:disabled {
    border-color: #c3c9cd;
    background: #eff3f6;
    color: #aab1b6;
  }
`

const Options = styled.fieldset`
  margin: 24px 0 27px -2px;
  padding: 0;
  border: 0;
  color: #1f2a33;
`

const Legend = styled.legend`
  padding: 0;
  font-family: ${mono};
  line-height: 13px;
`

const Option = styled.label`
  display: flex;
  align-items: center;
  gap: 3px;
  height: 15px;
  font-size: 10px;
`

const Radio = styled.input`
  appearance: none;
  width: 11px;
  height: 11px;
  border: 1px solid #9dbacb;
  border-radius: 50%;
  background: #f3f9fc;
  &:checked {
    border-color: #6896b2;
    background: radial-gradient(circle, #1f6b95 0 2px, #74b4d4 3px, #d5eaf5 4px);
  }
`

const Preview = styled.div`
  flex: 1;
  border: 2px solid #bcd0da;
  border-radius: 2px;
  background: #7d99bf;
`

const Viewport = styled.section`
  position: relative;
  flex: 1;
  min-width: 0;
  overflow: hidden;
  background: linear-gradient(#c6dbeb, #b5cce2 15%, #93afd1 48%, #7c98bf 71%, #5c7aaa);
`

const Scene = styled.svg`
  display: block;
  width: 100%;
  height: 100%;
`

const Tooltip = styled.div`
  position: absolute;
  top: 324px;
  left: 499px;
  padding: 3px 4px;
  border: 1px solid #5c7488;
  border-radius: 3px;
  background: linear-gradient(#fff, #e9f1f6);
  box-shadow: 2px 2px 2px #3c516a;
  color: #4b657b;
`

const SideBar = styled.nav`
  display: flex;
  flex: none;
  flex-direction: column;
  width: 35px;
  background: #dae8f3;
`

const GripRow = styled.i`
  height: 11px;
  background: radial-gradient(circle, #7f95a8 0 1px, transparent 1px) 0 3px / 3px 3px;
  clip-path: inset(3px 0 2px 0);
`

const SideTool = styled.button`
  display: flex;
  align-items: center;
  justify-content: space-between;
  height: 24px;
  padding: 0 4px 0 3px;
`

const Watermark = styled.div`
  position: absolute;
  right: 0;
  bottom: 5px;
  display: flex;
  width: 211px;
  height: 62px;
  padding-top: 2px;
  background: rgba(205, 220, 235, 0.4);
`

const MarkText = styled.div`
  display: flex;
  flex-direction: column;
`

const MarkName = styled.strong`
  margin-left: 12px;
  font-size: 29px;
  line-height: 38px;
  color: #53a391;
`

const MarkUrl = styled.span`
  font-family: "DejaVu Sans", sans-serif;
  font-size: 14px;
  line-height: 18px;
  color: #6c92b9;
`

const Speed = styled.div`
  position: absolute;
  right: 0;
  bottom: 56px;
  display: flex;
  align-items: center;
`

const SpeedBall = styled.div`
  width: 40px;
  height: 40px;
  margin-right: -6px;
  z-index: 1;
  border: 2px solid #e2ece6;
  border-radius: 50%;
  background: linear-gradient(#57a77f 0, #137048 20%, #14784a 48%, #57c664 50%, #7ddc7d);
  box-shadow: 0 1px 3px #555;
  font-family: "Liberation Sans", sans-serif;
  font-size: 13px;
  line-height: 36px;
  text-align: center;
  color: #fff;
`

const SpeedBar = styled.div`
  width: 37px;
  height: 32px;
  padding: 4px 0 0 9px;
  overflow: hidden;
  border: 1px solid #c0c0c0;
  border-right: 0;
  background: linear-gradient(#fdfdfd, #dcdcdc);
  font-size: 9px;
  line-height: 12px;
  color: #222;
`

const SpeedLine = styled.div`
  display: flex;
  justify-content: space-between;
`

const Arrow = styled.b`
  font-family: "DejaVu Sans", sans-serif;
  color: ${(p) => (p.$up ? '#d6453b' : '#279252')};
`

const CornerBall = styled.div`
  position: absolute;
  right: -28px;
  bottom: -21px;
  width: 40px;
  height: 40px;
  border: 2px solid #e2ece6;
  border-radius: 50%;
  background: #187a4c;
`

export default App
